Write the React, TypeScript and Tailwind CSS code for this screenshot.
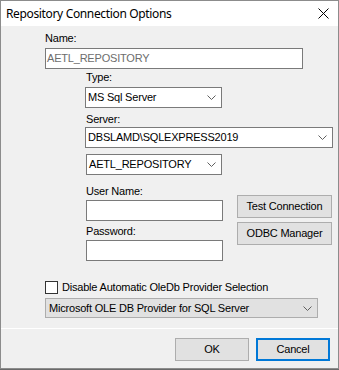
import React from "react";

const Chevron = () => (
  <svg width="9" height="5" viewBox="0 0 9 5" className="shrink-0">
    <polyline points="0.5,0.5 4.5,4.5 8.5,0.5" fill="none" stroke="#606060" strokeWidth="1" />
  </svg>
);

const Label = ({ children, className = "" }: { children: React.ReactNode; className?: string }) => (
  <div className={"h-[12px] leading-[12px] text-black " + className}>{children}</div>
);

const Select = ({ text, className = "" }: { text: string; className?: string }) => (
  <div className={"h-[21px] bg-white border border-[#7a7a7a] flex items-center pl-[2px] pr-[5px] " + className}>
    <span className="flex-1 whitespace-nowrap">{text}</span>
    <Chevron />
  </div>
);

const Btn = ({ children, className = "" }: { children: React.ReactNode; className?: string }) => (
  <div className={"h-[23px] bg-[#e1e1e1] border border-[#adadad] flex items-center justify-center " + className}>
    {children}
  </div>
);

export default function App() {
  return (
    <div className="w-[339px] h-[370px] bg-[#6a6a6a]">
      <div
        className="w-[339px] h-[369px] border border-[#8c8c8c] flex flex-col text-[11px] tracking-[-0.2px]"
        style={{ fontFamily: '"Liberation Sans", Arial, sans-serif' }}
      >
        {/* title bar */}
        <div className="h-[25px] bg-white flex items-center pl-[5px] pr-[9px] shrink-0">
          <span
            className="flex-1 text-[12px] tracking-[-0.35px] text-black pt-[1px]"
            style={{ fontFamily: '"Noto Sans", "Open Sans", sans-serif' }}
          >
            Repository Connection Options
          </span>
          <svg width="11" height="11" viewBox="0 0 11 11">
            <path d="M0.5 0.5 L10.5 10.5 M10.5 0.5 L0.5 10.5" stroke="#000" strokeWidth="1" />
          </svg>
        </div>

        {/* body */}
        <div className="flex-1 bg-[#f0f0f0] flex flex-col">
          <div className="flex-1 flex flex-col pl-[44px]">
            <Label className="mt-[6px]">Name:</Label>
            <div className="mt-[4px] w-[258px] h-[21px] bg-white border border-[#7a7a7a] flex items-center pl-[1px] text-[#6d6d6d]">
              AETL_REPOSITORY
            </div>

            <div className="flex flex-col pl-[40px]">
              <Label className="mt-[2px] pl-[1px]">Type:</Label>
              <Select text="MS Sql Server" className="mt-[4px] w-[137px]" />
              <Label className="mt-[5px] pl-[1px]">Server:</Label>
              <Select text="DBSLAMD\SQLEXPRESS2019" className="mt-[2px] w-[248px]" />
              <Select text="AETL_REPOSITORY" className="mt-[6px] ml-[1px] w-[136px]" />

              <div className="flex mt-[10px]">
                <div className="flex flex-col pl-[1px] w-[152px]">
                  <Label>User Name:</Label>
                  <div className="mt-[3px] w-[137px] h-[21px] bg-white border border-[#7a7a7a]" />
                  <Label className="mt-[4px]">Password:</Label>
                  <div className="mt-[3px] w-[137px] h-[21px] bg-white border border-[#7a7a7a]" />
                </div>
                <div className="flex flex-col pt-[10px] gap-[4px]">
                  <Btn className="w-[95px]">Test Connection</Btn>
                  <Btn className="w-[95px]">ODBC Manager</Btn>
                </div>
              </div>
            </div>

            <div className="mt-[20px] flex items-center h-[13px]">
              <div className="w-[13px] h-[13px] bg-white border border-[#333333] shrink-0" />
              <span className="ml-[4px] leading-[13px] whitespace-nowrap">Disable Automatic OleDb Provider Selection</span>
            </div>
            <div className="mt-[4px] w-[273px] h-[20px] bg-[#e1e1e1] border border-[#adadad] flex items-center pl-[3px] pr-[5px]">
              <span className="flex-1 whitespace-nowrap">Microsoft OLE DB Provider for SQL Server</span>
              <Chevron />
            </div>
          </div>

          <div className="h-[1px] bg-white shrink-0" />

          <div className="h-[39px] shrink-0 flex justify-end items-start pt-[9px] pr-[8px] gap-[7px]">
            <Btn className="w-[74px]">OK</Btn>
            <div className="w-[74px] h-[23px] bg-[#e1e1e1] border-2 border-[#0078d7] flex items-center justify-center">
              Cancel
            </div>
          </div>
        </div>
      </div>
    </div>
  );
}
